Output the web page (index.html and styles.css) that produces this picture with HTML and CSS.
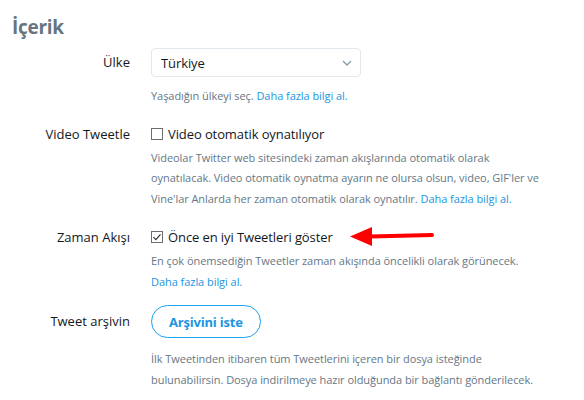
FILE: index.html
```html
<!DOCTYPE html>
<html lang="tr">
<head>
<meta charset="utf-8">
<title>İçerik</title>
<link rel="stylesheet" href="styles.css">
</head>
<body>
<div class="page">
  <h2 class="title">İçerik</h2>

  <div class="row row-country">
    <div class="label label-select">Ülke</div>
    <div class="control">
      <div class="select">
        <span>Türkiye</span>
        <svg class="chev" width="10" height="6" viewBox="0 0 10 6"><path d="M1 1l4 4 4-4" fill="none" stroke="#8899a6" stroke-width="1.3"/></svg>
      </div>
      <p class="help help-first">Yaşadığın ülkeyi seç. <a class="link">Daha fazla bilgi al.</a></p>
    </div>
  </div>

  <div class="row row-video">
    <div class="label">Video Tweetle</div>
    <div class="control">
      <div class="check"><span class="box"></span><span>Video otomatik oynatılıyor</span></div>
      <p class="help">Videolar Twitter web sitesindeki zaman akışlarında otomatik olarak<br>oynatılacak. Video otomatik oynatma ayarın ne olursa olsun, video, GIF'ler ve<br>Vine'lar Anlarda her zaman otomatik olarak oynatılır. <a class="link">Daha fazla bilgi al.</a></p>
    </div>
  </div>

  <div class="row row-timeline">
    <div class="label">Zaman Akışı</div>
    <div class="control">
      <div class="check"><span class="box"><svg width="10" height="10" viewBox="0 0 10 10"><path d="M1.5 5.2l2.4 2.4 4.6-5.2" fill="none" stroke="#333" stroke-width="1.2"/></svg></span><span>Önce en iyi Tweetleri göster</span></div>
      <p class="help"><span>En çok önemsediğin Tweetler zaman akışında öncelikli olarak görünecek.</span><br><a class="link">Daha fazla bilgi al.</a></p>
      <svg class="arrow" width="86" height="22" viewBox="0 0 86 22"><polygon points="0,9.5 22,0 22,19" fill="#f00"/><path d="M20 9.5 L82 8" stroke="#f00" stroke-width="4" stroke-linecap="round"/></svg>
    </div>
  </div>

  <div class="row row-archive">
    <div class="label label-button">Tweet arşivin</div>
    <div class="control">
      <button class="btn">Arşivini iste</button>
      <p class="help help-archive">İlk Tweetinden itibaren tüm Tweetlerini içeren bir dosya isteğinde<br>bulunabilirsin. Dosya indirilmeye hazır olduğunda bir bağlantı gönderilecek.</p>
    </div>
  </div>
</div>
</body>
</html>
```

FILE: styles.css
```css
html, body {
  margin: 0;
  padding: 0;
  background: #fff;
}
body {
  font-family: "Open Sans", "Noto Sans", sans-serif;
  color: #14171a;
  width: 584px;
  height: 400px;
  overflow: hidden;
}
.page {
  padding: 14px 0 0 12px;
}
.title {
  margin: 0;
  font-size: 19px;
  line-height: 26px;
  font-weight: 700;
  color: #66757f;
  letter-spacing: -0.3px;
}
.row {
  display: grid;
  grid-template-columns: 118px 393px;
  column-gap: 21px;
}
.label {
  text-align: right;
  font-size: 13px;
  line-height: 20px;
  letter-spacing: 0;
}
.control {
  position: relative;
}
.row-country {
  margin-top: 8px;
}
.label-select {
  padding-top: 4px;
}
.select {
  box-sizing: border-box;
  width: 210px;
  height: 29px;
  border: 1px solid #e1e8ed;
  border-radius: 4px;
  display: flex;
  align-items: center;
  justify-content: space-between;
  padding: 0 8px 0 9px;
  font-size: 13px;
  letter-spacing: -0.1px;
}
.help {
  margin: 4px 0 0;
  font-size: 11px;
  line-height: 20.5px;
  color: #657786;
  letter-spacing: -0.05px;
  white-space: nowrap;
}
.help-first {
  margin-top: 9px;
}
.link {
  color: #1b95e0;
  text-decoration: none;
}
.row-video {
  margin-top: 17px;
}
.row-timeline {
  margin-top: 18px;
}
.row-archive {
  margin-top: 13px;
}
.check {
  display: flex;
  align-items: center;
  gap: 5px;
  font-size: 13px;
  line-height: 20px;
  letter-spacing: -0.1px;
}
.box {
  box-sizing: border-box;
  width: 12px;
  height: 12px;
  border: 1px solid #6d6d6d;
  display: flex;
  align-items: center;
  justify-content: center;
}
.arrow {
  position: absolute;
  left: 199px;
  top: 0;
}
.label-button {
  padding-top: 6px;
}
.btn {
  box-sizing: border-box;
  height: 33px;
  padding: 0 17px;
  border: 1px solid #1da1f2;
  border-radius: 17px;
  background: #fff;
  color: #1b95e0;
  font-family: "Open Sans", "Noto Sans", sans-serif;
  font-size: 13px;
  font-weight: 700;
  letter-spacing: -0.2px;
  cursor: pointer;
}
.help-archive {
  margin-top: 11px;
}
```
